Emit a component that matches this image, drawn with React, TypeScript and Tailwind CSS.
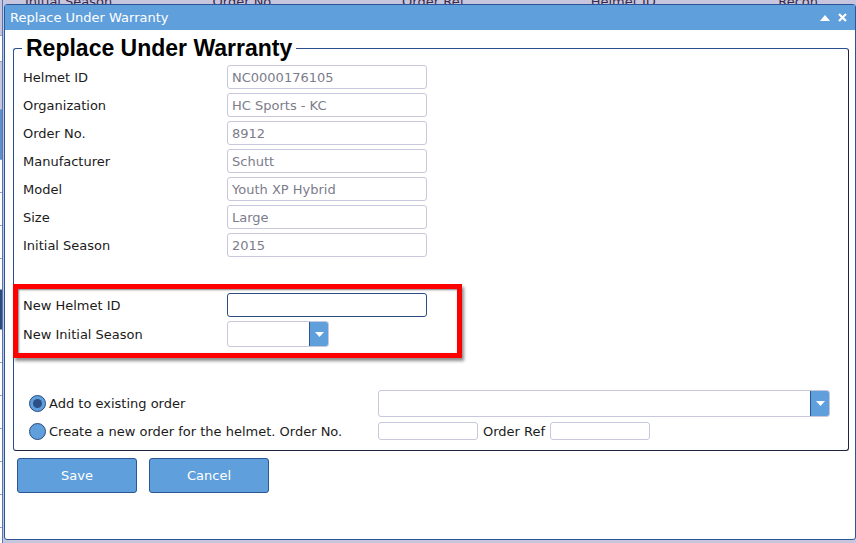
import React from "react";

const font = { fontFamily: '"DejaVu Sans", Verdana, sans-serif' };

function Field({ label, value }: { label: string; value: string }) {
  return (
    <div className="flex items-center h-[24px]">
      <div className="w-[204px] text-[13px] text-[#1b1b1b] leading-none">{label}</div>
      <div className="w-[200px] h-[24px] border border-[#c8c8dc] rounded-[3px] bg-white flex items-center px-[4px] text-[13px] text-[#7c7c8c] leading-none">
        {value}
      </div>
    </div>
  );
}

function Arrow() {
  return (
    <svg width="9" height="5" viewBox="0 0 9 5">
      <path d="M0 0 H9 L4.5 5 Z" fill="#ffffff" />
    </svg>
  );
}

export default function App() {
  const bgRows = [
    { h: 36, c: "bg-[#c8c6de]" },
    { h: 26, c: "bg-white" },
    { h: 48, c: "bg-[#c8c6de]" },
    { h: 50, c: "bg-[#5f8fc8]" },
    { h: 33, c: "bg-white" },
    { h: 33, c: "bg-white" },
    { h: 33, c: "bg-white" },
    { h: 31, c: "bg-white" },
    { h: 40, c: "bg-[#2c4a7c]" },
    { h: 33, c: "bg-white" },
    { h: 33, c: "bg-white" },
    { h: 33, c: "bg-white" },
    { h: 33, c: "bg-white" },
    { h: 33, c: "bg-white" },
    { h: 33, c: "bg-white" },
    { h: 20, c: "bg-white" },
  ];
  return (
    <div className="relative w-[856px] h-[543px] overflow-hidden bg-[#c8c6de]" style={font}>
      {/* background page */}
      <div className="flex flex-col w-full h-full">
        <div className="flex h-[0px] text-[13px] text-[#3a2a4a] leading-none">
          <div className="-mt-[5px] flex w-full">
            <span className="ml-[25px] w-[188px]">Initial Season</span>
            <span className="w-[190px]">Order No</span>
            <span className="w-[189px]">Order Ref</span>
            <span className="w-[188px]">Helmet ID</span>
            <span>Recon Helm</span>
          </div>
        </div>
        <div className="flex flex-col w-[3px] border-r border-[#4d78b4]">
          {bgRows.map((r, i) => (
            <div key={i} className={`${r.c} border-b border-[#8fa6cc]`} style={{ height: r.h }} />
          ))}
        </div>
        <div className="flex h-[4px] mt-auto">
          <div className="w-[102px] border-r border-[#4d78b4]" />
          <div className="w-[100px] border-r border-[#4d78b4]" />
          <div className="w-[100px] border-r border-[#4d78b4]" />
          <div className="w-[80px] border-r border-[#4d78b4]" />
          <div className="w-[300px] border-r border-[#4d78b4]" />
          <div className="w-[150px] border-r border-[#4d78b4]" />
        </div>
      </div>

      {/* dialog window */}
      <div className="absolute left-[4px] top-[4px] w-[852px] h-[536px] border border-[#2b5597] rounded-[3px] bg-white flex flex-col">
        <div className="h-[25px] bg-[#5f9fdb] flex items-center justify-between pl-[5px] pr-[8px]">
          <span className="text-[13px] text-white leading-none">Replace Under Warranty</span>
          <div className="flex items-center gap-[8px]">
            <svg width="10" height="6" viewBox="0 0 10 6">
              <path d="M0 6 L5 0 L10 6 Z" fill="#ffffff" />
            </svg>
            <svg width="9" height="9" viewBox="0 0 9 9">
              <path d="M1 1 L8 8 M8 1 L1 8" stroke="#ffffff" strokeWidth="2.2" />
            </svg>
          </div>
        </div>

        <div className="px-[8px] pt-[5px] flex flex-col">
          <fieldset className="border border-[#2b4f8c] border-r-[#1c2440] border-b-[#1c2440] rounded-[3px] pl-[9px] pr-[18px] pb-[10px] pt-[4px] w-[835px]">
            <legend className="-ml-[1px] px-[4px] text-[23px] font-bold text-black leading-[26px]" style={{ fontFamily: '"Liberation Sans", Arial, sans-serif' }}>
              Replace Under Warranty
            </legend>
            <div className="flex flex-col gap-[4px]">
              <Field label="Helmet ID" value="NC0000176105" />
              <Field label="Organization" value="HC Sports - KC" />
              <Field label="Order No." value="8912" />
              <Field label="Manufacturer" value="Schutt" />
              <Field label="Model" value="Youth XP Hybrid" />
              <Field label="Size" value="Large" />
              <Field label="Initial Season" value="2015" />
            </div>

            <div className="flex flex-col gap-[4px] mt-[36px]">
              <div className="flex items-center h-[24px]">
                <div className="w-[204px] text-[13px] text-[#1b1b1b] leading-none">New Helmet ID</div>
                <div className="w-[200px] h-[24px] border border-[#2c4b80] rounded-[3px] bg-white" />
              </div>
              <div className="flex items-center h-[26px]">
                <div className="w-[204px] text-[13px] text-[#1b1b1b] leading-none">New Initial Season</div>
                <div className="w-[102px] h-[26px] border border-[#c8c8dc] rounded-[3px] bg-white flex justify-end overflow-hidden">
                  <div className="w-[19px] h-full bg-[#5f9fdb] border-l border-[#2c5594] flex items-center justify-center">
                    <Arrow />
                  </div>
                </div>
              </div>
            </div>

            <div className="flex flex-col gap-[5px] mt-[43px] pl-[6px]">
              <div className="flex items-center h-[27px]">
                <div className="w-[349px] flex items-center">
                  <div className="w-[17px] h-[17px] rounded-full bg-[#5f9fdb] border border-[#2c4b80] flex items-center justify-center">
                    <div className="w-[9px] h-[9px] rounded-full bg-[#2c4f86]" />
                  </div>
                  <span className="ml-[3px] text-[13px] text-[#1b1b1b] leading-none">Add to existing order</span>
                </div>
                <div className="w-[452px] h-[27px] border border-[#c8c8dc] rounded-[3px] bg-white flex justify-end overflow-hidden">
                  <div className="w-[19px] h-full bg-[#5f9fdb] border-l border-[#2c5594] flex items-center justify-center">
                    <Arrow />
                  </div>
                </div>
              </div>
              <div className="flex items-center h-[18px]">
                <div className="w-[349px] flex items-center">
                  <div className="w-[17px] h-[17px] rounded-full bg-[#5f9fdb] border border-[#2c4b80]" />
                  <span className="ml-[3px] text-[13px] text-[#1b1b1b] leading-none">Create a new order for the helmet. Order No.</span>
                </div>
                <div className="w-[100px] h-[18px] border border-[#c8c8dc] rounded-[3px] bg-white" />
                <span className="ml-[5px] text-[13px] text-[#1b1b1b] leading-none">Order Ref</span>
                <div className="ml-[5px] w-[100px] h-[18px] border border-[#c8c8dc] rounded-[3px] bg-white" />
              </div>
            </div>
          </fieldset>

          <div className="flex gap-[12px] mt-[7px] pl-[4px]">
            <button className="w-[120px] h-[35px] bg-[#5f9fdb] border border-[#2c5594] rounded-[3px] text-white text-[13px]">Save</button>
            <button className="w-[120px] h-[35px] bg-[#5f9fdb] border border-[#2c5594] rounded-[3px] text-white text-[13px]">Cancel</button>
          </div>
        </div>
      </div>

      {/* red highlight annotation */}
      <div className="absolute left-[13px] top-[284px] w-[449px] h-[74px] border-[5px] border-[#ff0000] shadow-[2px_3px_3px_rgba(0,0,0,0.45),inset_1px_1px_2px_rgba(0,0,0,0.5)] pointer-events-none" />
    </div>
  );
}
